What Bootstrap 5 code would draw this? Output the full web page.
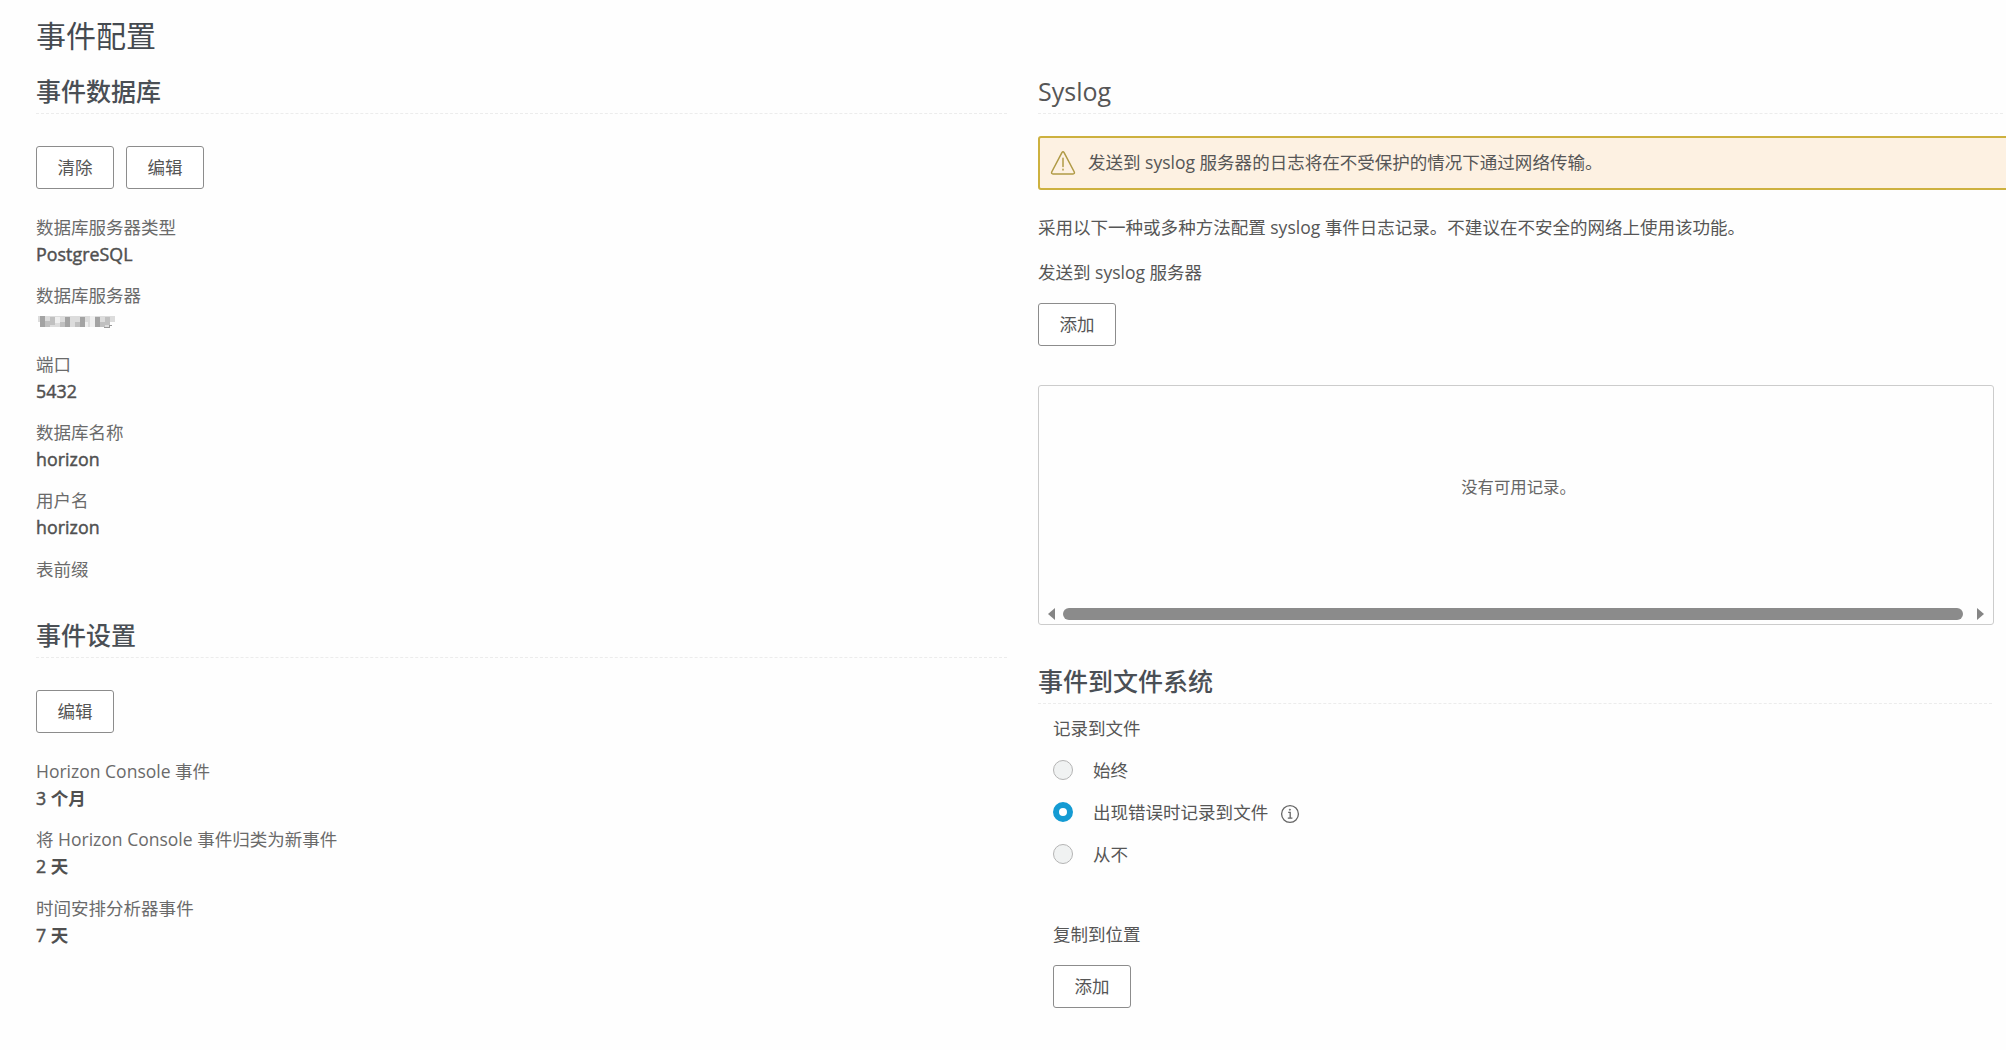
<!DOCTYPE html>
<html lang="zh-CN">
<head>
<meta charset="utf-8">
<meta name="viewport" content="width=device-width, initial-scale=1">
<title>事件配置</title>
<link href="https://cdn.jsdelivr.net/npm/bootstrap@5.3.0/dist/css/bootstrap.min.css" rel="stylesheet">
<style>
body{font-family:"Open Sans","Noto Sans CJK SC",sans-serif;font-size:17.53px;line-height:27px;color:#565656;background:#fefefe;overflow:hidden;height:1050px}
.page-title{font-size:30px;line-height:40px;font-weight:400;color:#454a50;padding:16px 0 0 36px;height:72px}
.col-left{width:1007px;padding-left:36px}
.col-right{width:968px;margin-left:31px}
.sec-title{font-size:25px;line-height:39px;height:42px;font-weight:500;color:#4a4f55;border-bottom:1.5px dashed #ececec}
.syslog-title{font-weight:400;width:965px;color:#565656}
.files-title{margin-top:37px;width:954px}
.btn-row{gap:12px;margin-top:32px}
.btn-clr{width:78px;height:43px;padding:0 0 1px;font-size:17.5px;line-height:39px;border:1px solid #8c8c8c;border-radius:3px;color:#565656;background:#fff}
.pair-list{padding-top:25px}
.db-list{height:427px}
.pair{height:68.35px}
.pair dt{font-weight:400;color:#6a6a6a;line-height:27px}
.pair dd{font-weight:700;color:#505050;line-height:27px}
.pair dd span{font-weight:400;font-size:17.8px;letter-spacing:.06px;-webkit-text-stroke:.45px #505050}
.masked{display:block;margin:6px 0 0 2px}
.warn{height:54px;width:990px;margin-top:22px;border:2px solid #cdb13f;border-radius:3px;background:#fdf1e2;padding-left:10px}
.warn span{margin-left:12px;padding-bottom:1px}
.intro{margin-top:24px}
.dest{margin-top:18px}
.add-btn{margin-top:17px}
.grid-box{width:956px;height:240px;margin-top:39px;border:1.5px solid #ccc;border-radius:3px;color:#666}
.grid-empty{height:200px;font-size:16.4px;padding-left:5px}
.grid-scroll{margin-top:22px;padding:0 9px 0 9px}
.thumb{width:900px;height:12px;border-radius:6px;background:#8b8b8b;margin-right:6px}
.file-group{padding:11px 0 0 15px}
.form-check-input.rd{width:20px;height:20px;margin:0;border:1px solid #b4b4b4;background-color:#f0f2f2}
.form-check-input.rd:checked{background:#fff;border:6.3px solid #149bd3}
.opts{margin-top:7px}
.opt{height:42px}
.opt label{margin-left:20px}
.info-icon{margin:3px 0 0 12px}
.copy-label{margin-top:46px}
</style>
</head>
<body>
<h1 class="page-title m-0">事件配置</h1>
<main class="d-flex">
 <section class="col-left flex-shrink-0">
  <h2 class="sec-title m-0">事件数据库</h2>
  <div class="d-flex btn-row">
   <button class="btn btn-clr">清除</button><button class="btn btn-clr">编辑</button>
  </div>
  <dl class="m-0 pair-list db-list">
   <div class="pair"><dt>数据库服务器类型</dt><dd class="m-0"><span>PostgreSQL</span></dd></div>
   <div class="pair"><dt>数据库服务器</dt><dd class="m-0">
    <svg class="masked" width="78" height="14" viewBox="0 0 78 14" shape-rendering="crispEdges">
     <g fill="#dcdcdc"><path d="M0 1h77v6H0z"/><path d="M2 7h70v5H2z"/></g>
     <g fill="#a3a3a3"><path d="M2 1h5v11H2zM27 2h5v10h-5zM42 2h5v10h-5zM57 2h5v10h-5z"/></g>
     <g fill="#c0c0c0"><path d="M7 6h5v6H7zM12 2h5v8h-5zM22 7h5v5h-5zM37 7h5v5h-5zM62 7h5v5h-5zM67 2h5v8h-5z"/></g>
     <g fill="#efefef"><path d="M17 2h5v6h-5zM52 1h5v11h-5zM47 7h3v5h-3z"/></g>
     <path d="M66 12h5v-2h3" fill="none" stroke="#999" stroke-width="1"/>
    </svg></dd></div>
   <div class="pair"><dt>端口</dt><dd class="m-0"><span>5432</span></dd></div>
   <div class="pair"><dt>数据库名称</dt><dd class="m-0"><span>horizon</span></dd></div>
   <div class="pair"><dt>用户名</dt><dd class="m-0"><span>horizon</span></dd></div>
   <div class="pair"><dt>表前缀</dt></div>
  </dl>
  <h2 class="sec-title m-0">事件设置</h2>
  <div class="d-flex btn-row"><button class="btn btn-clr">编辑</button></div>
  <dl class="m-0 pair-list">
   <div class="pair"><dt>Horizon Console 事件</dt><dd class="m-0"><span>3</span> 个月</dd></div>
   <div class="pair"><dt>将 Horizon Console 事件归类为新事件</dt><dd class="m-0"><span>2</span> 天</dd></div>
   <div class="pair"><dt>时间安排分析器事件</dt><dd class="m-0"><span>7</span> 天</dd></div>
  </dl>
 </section>
 <section class="col-right flex-shrink-0">
  <h2 class="sec-title syslog-title m-0">Syslog</h2>
  <div class="warn d-flex align-items-center" role="alert">
   <svg width="26" height="26" viewBox="0 0 26 26" fill="none" stroke="#b09a45" stroke-width="1.5" stroke-linejoin="round" stroke-linecap="round"><path d="M11.9 2.6 Q13 .9 14.1 2.6 L24.3 22 Q24.9 23.8 23 23.9 H3 Q1.1 23.8 1.7 22 Z"/><path d="M13 8.2v8.2M13 19.3v.6"/></svg>
   <span>发送到 syslog 服务器的日志将在不受保护的情况下通过网络传输。</span>
  </div>
  <p class="mb-0 intro">采用以下一种或多种方法配置 syslog 事件日志记录。不建议在不安全的网络上使用该功能。</p>
  <p class="mb-0 dest">发送到 syslog 服务器</p>
  <button class="btn btn-clr d-block add-btn">添加</button>
  <div class="grid-box">
   <div class="grid-empty d-flex align-items-center justify-content-center">没有可用记录。</div>
   <div class="grid-scroll d-flex align-items-center justify-content-between">
    <svg width="7" height="12" viewBox="0 0 7 12" fill="#858585"><path d="M7 0v12L0 6z"/></svg>
    <div class="thumb"></div>
    <svg width="7" height="12" viewBox="0 0 7 12" fill="#858585"><path d="M0 0v12l7-6z"/></svg>
   </div>
  </div>
  <h2 class="sec-title files-title mb-0">事件到文件系统</h2>
  <div class="file-group">
   <div>记录到文件</div>
   <div class="opts">
    <div class="opt d-flex align-items-center"><input class="form-check-input rd" type="radio" name="log" id="r1"><label for="r1">始终</label></div>
    <div class="opt d-flex align-items-center"><input class="form-check-input rd" type="radio" name="log" id="r2" checked><label for="r2">出现错误时记录到文件</label>
     <svg class="info-icon" width="20" height="20" viewBox="0 0 20 20" fill="none" stroke="#666" stroke-width="1.3"><circle cx="10" cy="10" r="8.4"/><path d="M8.2 8.4h2v5.8M7.8 14.2h4.6"/><circle cx="9.9" cy="5.7" r=".6" fill="#666" stroke-width=".8"/></svg></div>
    <div class="opt d-flex align-items-center"><input class="form-check-input rd" type="radio" name="log" id="r3"><label for="r3">从不</label></div>
   </div>
   <div class="copy-label">复制到位置</div>
   <button class="btn btn-clr d-block add-btn">添加</button>
  </div>
 </section>
</main>
<script src="https://cdn.jsdelivr.net/npm/bootstrap@5.3.0/dist/js/bootstrap.bundle.min.js"></script>
</body>
</html>
